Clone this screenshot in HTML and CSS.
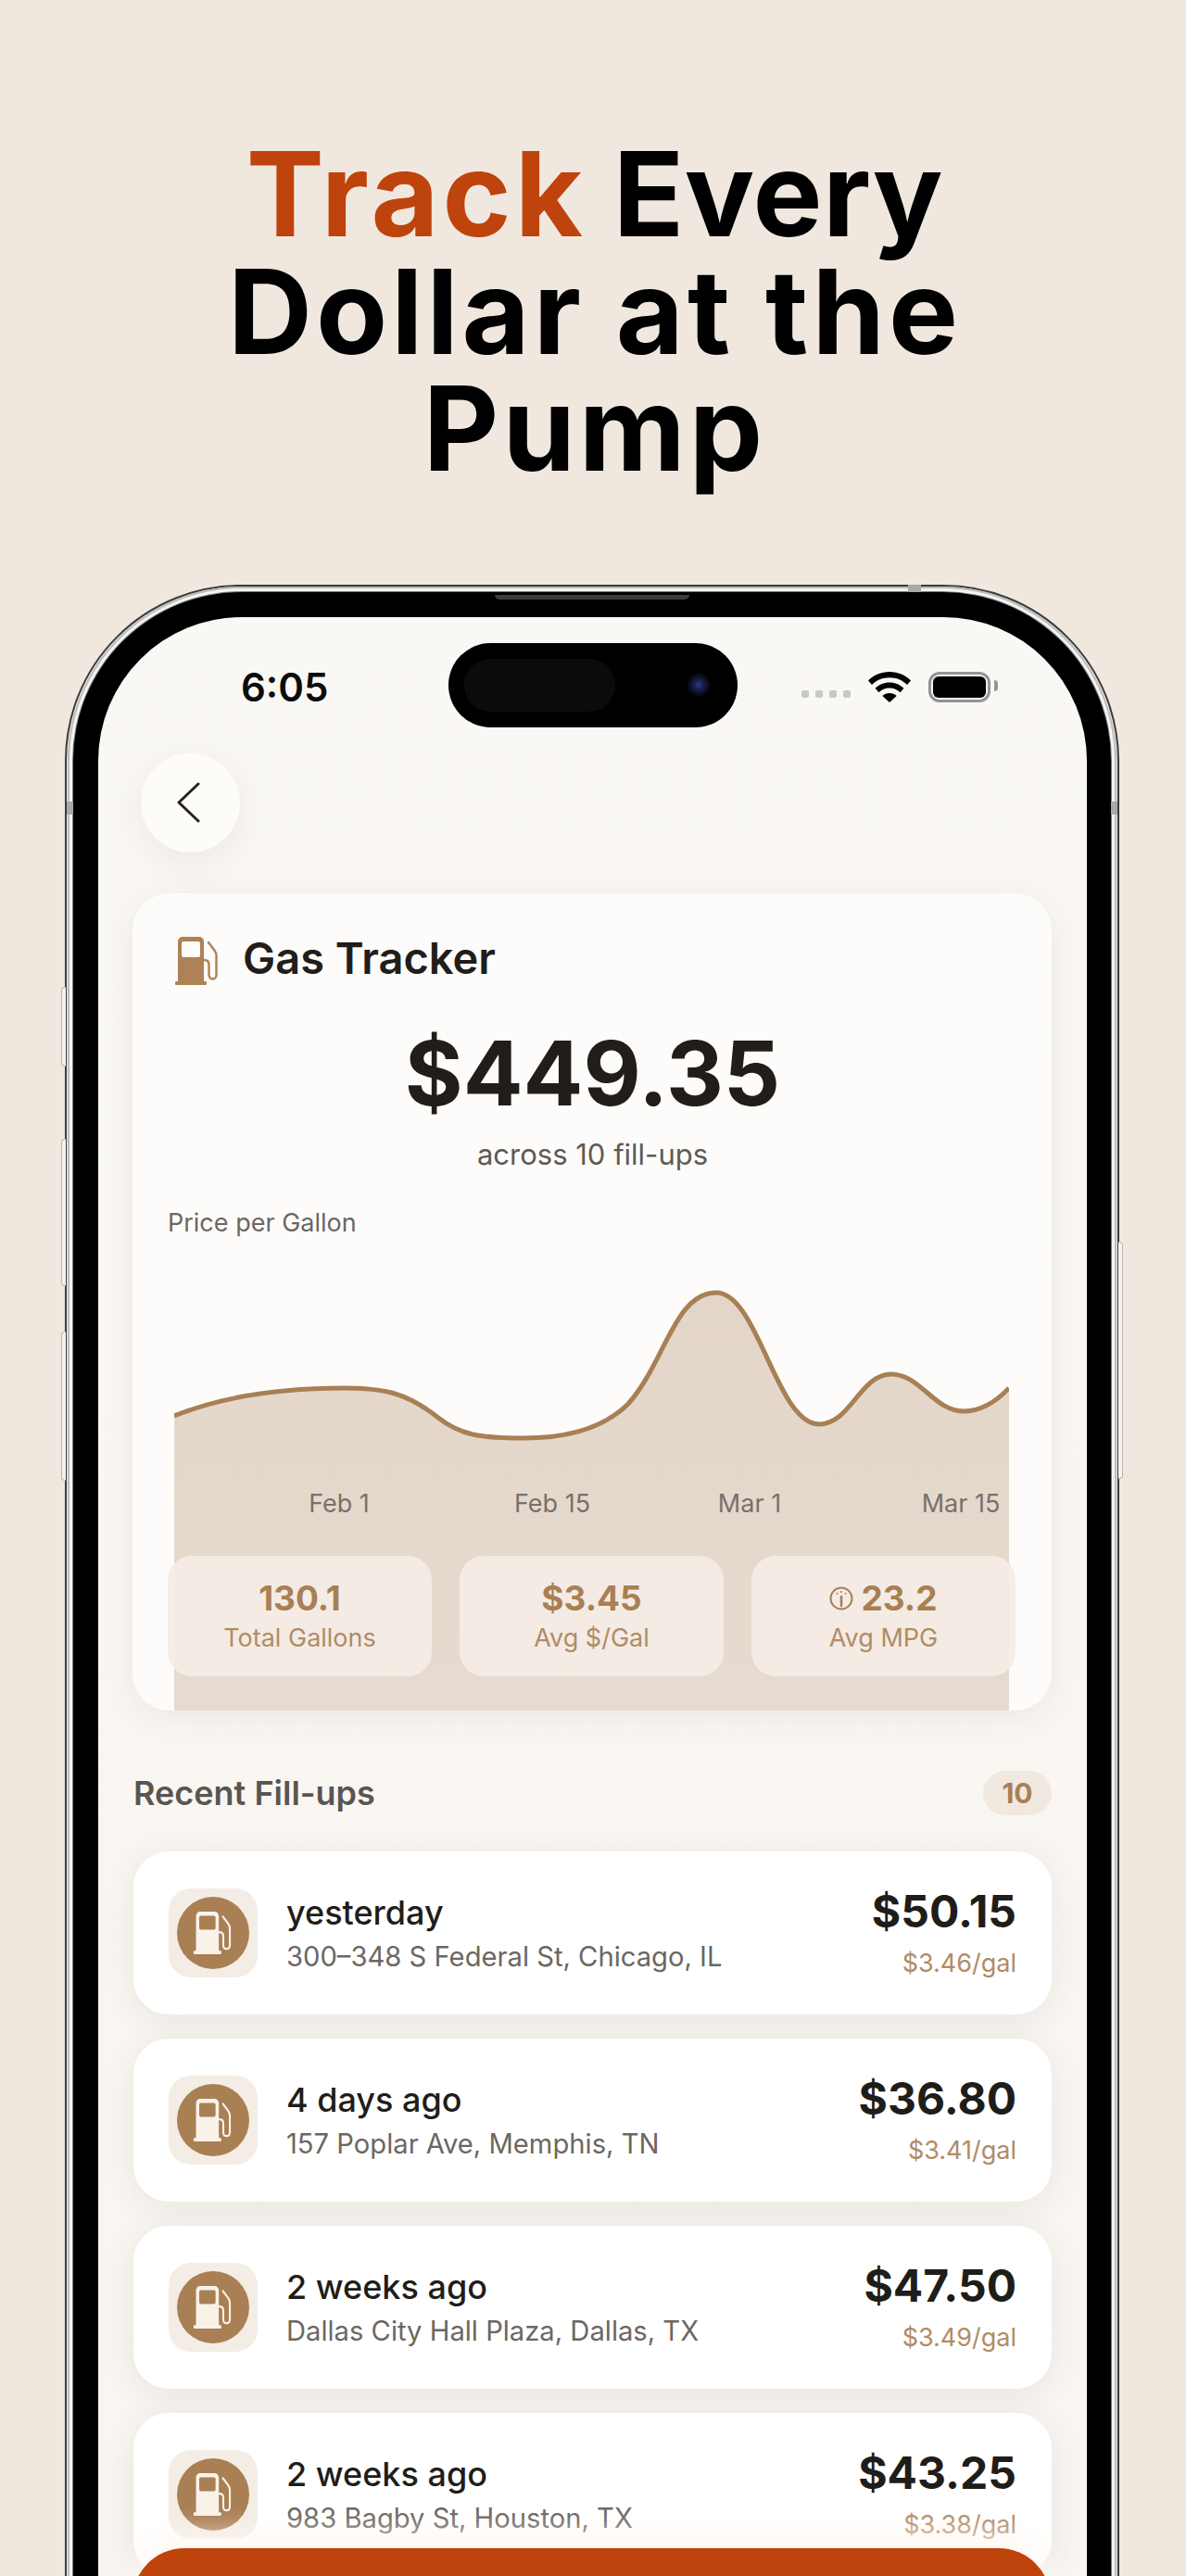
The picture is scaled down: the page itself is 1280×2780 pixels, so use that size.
FILE: index.html
```html
<!DOCTYPE html>
<html lang="en">
<head>
    <meta charset="UTF-8">
    <meta name="viewport" content="width=device-width, initial-scale=1.0">
    <title>Track Every Dollar at the Pump</title>
    <link rel="stylesheet" href="styles.css">
</head>
<body>
    <svg class="defs" width="0" height="0" aria-hidden="true">
        <symbol id="pump" viewBox="0 0 50 54">
            <path fill-rule="evenodd" d="M4 50V6a5 5 0 0 1 5-5h18a5 5 0 0 1 5 5v44zM10 6a2 2 0 0 0-2 2v13a2 2 0 0 0 2 2h16a2 2 0 0 0 2-2V8a2 2 0 0 0-2-2z"/>
            <rect x="1" y="49" width="34" height="4" rx="1"/>
            <path fill="none" stroke="currentColor" stroke-width="2.4" stroke-linecap="round" d="M37 7l6 8c1.500 2 2.500 3.500 2.500 6v21c0 6-8 6-8 0V31c0-3-1.500-5-5-5"/>
        </symbol>
    </svg>

    <h1 class="headline"><span class="accent">Track</span> <span class="every">Every</span><br>Dollar at the<br>Pump</h1>

    <div class="phone">
        <i class="side-btn btn-a"></i>
        <i class="side-btn btn-b"></i>
        <i class="side-btn btn-c"></i>
        <i class="side-btn btn-power"></i>
        <i class="rim-notch notch-top"></i>
        <i class="rim-notch notch-left"></i>
        <i class="rim-notch notch-right"></i>
        <div class="bezel">
            <div class="speaker"></div>
            <div class="screen">
                <div class="island">
                    <div class="island-pill"></div>
                    <div class="island-cam"></div>
                </div>

                <div class="status">
                    <span class="time">6:05</span>
                    <div class="status-right">
                        <div class="signal"><i></i><i></i><i></i><i></i></div>
                        <svg class="wifi" viewBox="0 0 46 33" width="46" height="33">
                            <path d="M23 0C14 0 6 3.500 0 9.500l4 4.500C9 9 15.500 6.300 23 6.300S37 9 42 14l4-4.500C40 3.500 32 0 23 0z"/>
                            <path d="M23 11.500c-6 0-11.500 2.300-15.500 6.300l4 4.500c3-3 7-4.700 11.500-4.700s8.500 1.700 11.500 4.700l4-4.500c-4-4-9.500-6.300-15.500-6.300z"/>
                            <path d="M23 23c-3 0-5.700 1.100-7.700 3L23 33l7.700-7c-2-1.900-4.700-3-7.700-3z"/>
                        </svg>
                        <div class="battery"><div class="battery-level"></div></div>
                    </div>
                </div>

                <button class="back-btn" aria-label="Back">
                    <svg viewBox="0 0 26 44" width="26" height="44"><path d="M24 2L3 22l21 20" fill="none" stroke="#26231f" stroke-width="3" stroke-linecap="round" stroke-linejoin="round"/></svg>
                </button>

                <section class="summary-card">
                    <svg class="chart" viewBox="0 0 901 466" width="901" height="466">
                        <defs>
                            <linearGradient id="chart-fill" x1="0" y1="0" x2="0" y2="1">
                                <stop offset="0" stop-color="#e3d6c8"/>
                                <stop offset="1" stop-color="#e6dbd0"/>
                            </linearGradient>
                        </defs>
                        <path fill="url(#chart-fill)" d="M0 148C50 128 110 118 182 118C225 118 250 122 285 150C310 170 335 172 377 172C425 172 465 160 490 135C530 90 540 15 585 15C630 15 650 157 696 157C730 157 740 103 774 103C805 103 820 143 852 143C870 143 885 135 901 118V466H0z"/>
                        <path fill="none" stroke="#a97f54" stroke-width="5" d="M0 148C50 128 110 118 182 118C225 118 250 122 285 150C310 170 335 172 377 172C425 172 465 160 490 135C530 90 540 15 585 15C630 15 650 157 696 157C730 157 740 103 774 103C805 103 820 143 852 143C870 143 885 135 901 118"/>
                        <g class="axis">
                            <text x="178" y="252" text-anchor="middle">Feb 1</text>
                            <text x="408" y="252" text-anchor="middle">Feb 15</text>
                            <text x="621" y="252" text-anchor="middle">Mar 1</text>
                            <text x="849" y="252" text-anchor="middle">Mar 15</text>
                        </g>
                    </svg>

                    <div class="card-title">
                        <svg class="title-icon" width="50" height="54"><use href="#pump"/></svg>
                        <h2>Gas Tracker</h2>
                    </div>
                    <div class="total">$449.35</div>
                    <div class="total-note">across 10 fill-ups</div>
                    <div class="chart-label">Price per Gallon</div>

                    <div class="stats">
                        <div class="stat">
                            <div class="stat-value">130.1</div>
                            <div class="stat-label">Total Gallons</div>
                        </div>
                        <div class="stat">
                            <div class="stat-value">$3.45</div>
                            <div class="stat-label">Avg $/Gal</div>
                        </div>
                        <div class="stat">
                            <div class="stat-value">
                                <svg class="gauge" viewBox="0 0 26 26" width="26" height="26" fill="none" stroke="#a97f54">
                                    <circle cx="13" cy="13" r="11.500" stroke-width="2"/>
                                    <path d="M13 11v10" stroke-width="2.600" stroke-linecap="round"/>
                                    <path d="M13 5v2M8 7l1 1.500M18 7l-1 1.500" stroke-width="1.600"/>
                                </svg>
                                23.2
                            </div>
                            <div class="stat-label">Avg MPG</div>
                        </div>
                    </div>
                </section>

                <div class="list-head">
                    <h3>Recent Fill-ups</h3>
                    <span class="count">10</span>
                </div>

                <div class="fillups">
                    <div class="fillup">
                        <div class="fillup-icon"><div class="fillup-disc"><svg width="44" height="48"><use href="#pump"/></svg></div></div>
                        <div class="fillup-info">
                            <div class="fillup-when">yesterday</div>
                            <div class="fillup-where">300–348 S Federal St, Chicago, IL</div>
                        </div>
                        <div class="fillup-cost">
                            <div class="fillup-price">$50.15</div>
                            <div class="fillup-rate">$3.46/gal</div>
                        </div>
                    </div>
                    <div class="fillup">
                        <div class="fillup-icon"><div class="fillup-disc"><svg width="44" height="48"><use href="#pump"/></svg></div></div>
                        <div class="fillup-info">
                            <div class="fillup-when">4 days ago</div>
                            <div class="fillup-where">157 Poplar Ave, Memphis, TN</div>
                        </div>
                        <div class="fillup-cost">
                            <div class="fillup-price">$36.80</div>
                            <div class="fillup-rate">$3.41/gal</div>
                        </div>
                    </div>
                    <div class="fillup">
                        <div class="fillup-icon"><div class="fillup-disc"><svg width="44" height="48"><use href="#pump"/></svg></div></div>
                        <div class="fillup-info">
                            <div class="fillup-when">2 weeks ago</div>
                            <div class="fillup-where">Dallas City Hall Plaza, Dallas, TX</div>
                        </div>
                        <div class="fillup-cost">
                            <div class="fillup-price">$47.50</div>
                            <div class="fillup-rate">$3.49/gal</div>
                        </div>
                    </div>
                    <div class="fillup">
                        <div class="fillup-icon"><div class="fillup-disc"><svg width="44" height="48"><use href="#pump"/></svg></div></div>
                        <div class="fillup-info">
                            <div class="fillup-when">2 weeks ago</div>
                            <div class="fillup-where">983 Bagby St, Houston, TX</div>
                        </div>
                        <div class="fillup-cost">
                            <div class="fillup-price">$43.25</div>
                            <div class="fillup-rate">$3.38/gal</div>
                        </div>
                    </div>
                </div>

                <div class="cta"></div>
            </div>
        </div>
    </div>
</body>
</html>
```

FILE: styles.css
```css
* {
    margin: 0;
    padding: 0;
    box-sizing: border-box;
}

html, body {
    height: 2780px;
    overflow: hidden;
}

body {
    font-family: 'Inter', 'Liberation Sans', sans-serif;
    background-color: #f0e8df;
    color: #1f1d1a;
}

.defs {
    position: absolute;
}

svg use {
    fill: currentColor;
}

.headline {
    padding: 146px 0 0 4px;
    font-size: 126px;
    line-height: 126.5px;
    font-weight: 700;
    letter-spacing: 4px;
    text-align: center;
    color: #000;
}

.accent {
    color: #bf430c;
}

.every {
    margin-left: -5px;
    letter-spacing: 0.5px;
}

/* phone frame */

.phone {
    position: relative;
    width: 1138px;
    height: 2400px;
    margin: 105px 0 0 70px;
    padding: 6px 7px 0 7px;
    border: 2px solid #3c3c3c;
    border-radius: 190px;
}

.side-btn {
    position: absolute;
    left: -6px;
    width: 5px;
    border: 1px solid #b9b5af;
    border-right: none;
    border-radius: 4px 0 0 4px;
    background: #f4f2ef;
}

.btn-a {
    top: 432px;
    height: 86px;
}

.btn-b {
    top: 596px;
    height: 159px;
}

.btn-c {
    top: 804px;
    height: 161px;
}

.btn-power {
    left: auto;
    right: -6px;
    top: 707px;
    height: 256px;
    border-right: 1px solid #b9b5af;
    border-left: none;
    border-radius: 0 4px 4px 0;
}

.rim-notch {
    position: absolute;
    z-index: 1;
    background: #a9a9a9;
}

.notch-top {
    top: -2px;
    left: 908px;
    width: 14px;
    height: 8px;
}

.notch-left {
    top: 232px;
    left: 0;
    width: 7px;
    height: 14px;
}

.notch-right {
    top: 232px;
    right: 0;
    width: 7px;
    height: 14px;
}

.bezel {
    position: relative;
    height: 100%;
    padding: 27px 26px 0 27px;
    border-radius: 182px 182px 0 0;
    background: #000;
    box-shadow: 0 0 0 1px #7d7d7d, 0 0 0 4px #f4f4f4, 0 0 0 6px #bdbdbd;
}

.speaker {
    position: absolute;
    top: 3px;
    left: 455px;
    width: 210px;
    height: 5px;
    border-radius: 0 0 6px 6px;
    background: #3b3b3b;
}

.screen {
    position: relative;
    height: 2300px;
    overflow: hidden;
    border-radius: 155px 155px 0 0;
    background: linear-gradient(180deg, #faf8f4, #f9f5f1);
}

/* status bar */

.island {
    position: absolute;
    top: 28px;
    left: 378px;
    width: 312px;
    height: 91px;
    border-radius: 46px;
    background: #000;
}

.island-pill {
    position: absolute;
    top: 17px;
    left: 17px;
    width: 163px;
    height: 57px;
    border-radius: 28px;
    background: #0b0b0b;
}

.island-cam {
    position: absolute;
    top: 33px;
    left: 258px;
    width: 24px;
    height: 24px;
    border-radius: 50%;
    background: radial-gradient(circle, #2c3f8c 0, #16204e 30%, #0a0c1c 60%, #050508 100%);
}

.status {
    display: flex;
    align-items: center;
    justify-content: space-between;
    height: 40px;
    margin-top: 56px;
    padding: 0 104px 0 154px;
}

.time {
    font-size: 42px;
    font-weight: 600;
    color: #0c0c0c;
}

.status-right {
    display: flex;
    align-items: center;
    gap: 19px;
}

.signal {
    display: flex;
    gap: 7px;
    margin-top: 14px;
}

.signal i {
    width: 8px;
    height: 8px;
    border-radius: 2px;
    background: #c8c8c8;
}

.battery {
    position: relative;
    width: 67px;
    height: 33px;
    padding: 2px;
    border: 3px solid #949494;
    border-radius: 12px;
}

.battery::after {
    content: "";
    position: absolute;
    top: 6px;
    right: -11px;
    width: 4px;
    height: 12px;
    border-radius: 0 4px 4px 0;
    background: #949494;
}

.battery-level {
    height: 100%;
    border-radius: 6px;
    background: #000;
}

.back-btn {
    display: flex;
    align-items: center;
    justify-content: center;
    width: 107px;
    height: 107px;
    margin: 51px 0 0 46px;
    padding-right: 6px;
    border: none;
    border-radius: 50%;
    background: #fefcf8;
    box-shadow: 0 10px 40px rgba(70, 50, 30, 0.08);
}

/* summary card */

.summary-card {
    position: relative;
    height: 882px;
    margin: 44px 38px 0 37px;
    padding: 41px 37px 0 38px;
    overflow: hidden;
    border-radius: 40px;
    background: #fdfcfa;
    box-shadow: 0 6px 36px rgba(70, 50, 30, 0.08);
}

.chart {
    position: absolute;
    left: 45px;
    bottom: 0;
    display: block;
}

.axis text {
    font-family: 'Inter', 'Liberation Sans', sans-serif;
    font-size: 27px;
    fill: #76716b;
}

.card-title {
    display: flex;
    align-items: center;
    gap: 24px;
    padding-left: 7px;
    position: relative;
}

.title-icon {
    color: #ad8256;
}

.card-title h2 {
    margin-bottom: 7px;
    font-size: 47px;
    font-weight: 600;
    color: #211e1a;
}

.total {
    position: relative;
    margin-top: 31px;
    font-size: 96px;
    line-height: 116px;
    font-weight: 700;
    text-align: center;
    color: #211e1a;
}

.total-note {
    position: relative;
    margin-top: 11px;
    font-size: 31px;
    line-height: 38px;
    text-align: center;
    color: #5f5a55;
}

.chart-label {
    position: relative;
    margin-top: 38px;
    font-size: 27px;
    line-height: 34px;
    color: #6c6762;
}

.stats {
    position: relative;
    display: grid;
    grid-template-columns: repeat(3, 285px);
    gap: 30px;
    margin-top: 342px;
}

.stat {
    height: 130px;
    padding-top: 24px;
    border-radius: 26px;
    background: rgba(244, 236, 229, 0.94);
    text-align: center;
}

.stat-value {
    display: flex;
    align-items: center;
    justify-content: center;
    gap: 8px;
    font-size: 37px;
    line-height: 44px;
    font-weight: 700;
    color: #a97f54;
}

.stat-label {
    margin-top: 5px;
    font-size: 27px;
    line-height: 32px;
    color: #b08c66;
}

/* fill-up list */

.list-head {
    display: flex;
    align-items: center;
    justify-content: space-between;
    margin: 65px 38px 0;
}

.list-head h3 {
    font-size: 36px;
    font-weight: 600;
    color: #5a5550;
}

.count {
    width: 74px;
    height: 48px;
    border-radius: 24px;
    background: #f1e9df;
    font-size: 30px;
    line-height: 48px;
    font-weight: 700;
    text-align: center;
    color: #a97f54;
}

.fillups {
    display: flex;
    flex-direction: column;
    gap: 26px;
    margin: 39px 38px 0;
}

.fillup {
    display: flex;
    align-items: center;
    height: 176px;
    padding: 0 38px;
    border-radius: 38px;
    background: #fff;
    box-shadow: 0 6px 36px rgba(70, 50, 30, 0.09);
}

.fillup-icon {
    display: flex;
    align-items: center;
    justify-content: center;
    flex: none;
    width: 96px;
    height: 96px;
    border-radius: 24px;
    background: #f3ede5;
}

.fillup-disc {
    display: flex;
    align-items: center;
    justify-content: center;
    width: 78px;
    height: 78px;
    border-radius: 50%;
    background: #a97f54;
    color: #f9f2e9;
}

.fillup-info {
    flex: 1;
    margin-left: 31px;
}

.fillup-when {
    font-size: 36px;
    line-height: 44px;
    font-weight: 500;
    color: #1f1d1a;
}

.fillup-where {
    margin-top: 8px;
    font-size: 29.200px;
    line-height: 36px;
    color: #6b6762;
}

.fillup-cost {
    text-align: right;
}

.fillup-price {
    font-size: 48px;
    line-height: 54px;
    font-weight: 700;
    color: #1f1d1a;
}

.fillup-rate {
    margin-top: 13px;
    font-size: 27px;
    line-height: 32px;
    color: #b08c66;
}

.cta {
    position: absolute;
    top: 2084px;
    left: 37px;
    width: 991px;
    height: 160px;
    border-radius: 56px;
    background: #bf430c;
    box-shadow: 0 -14px 30px rgba(255, 247, 242, 0.9);
}
```
